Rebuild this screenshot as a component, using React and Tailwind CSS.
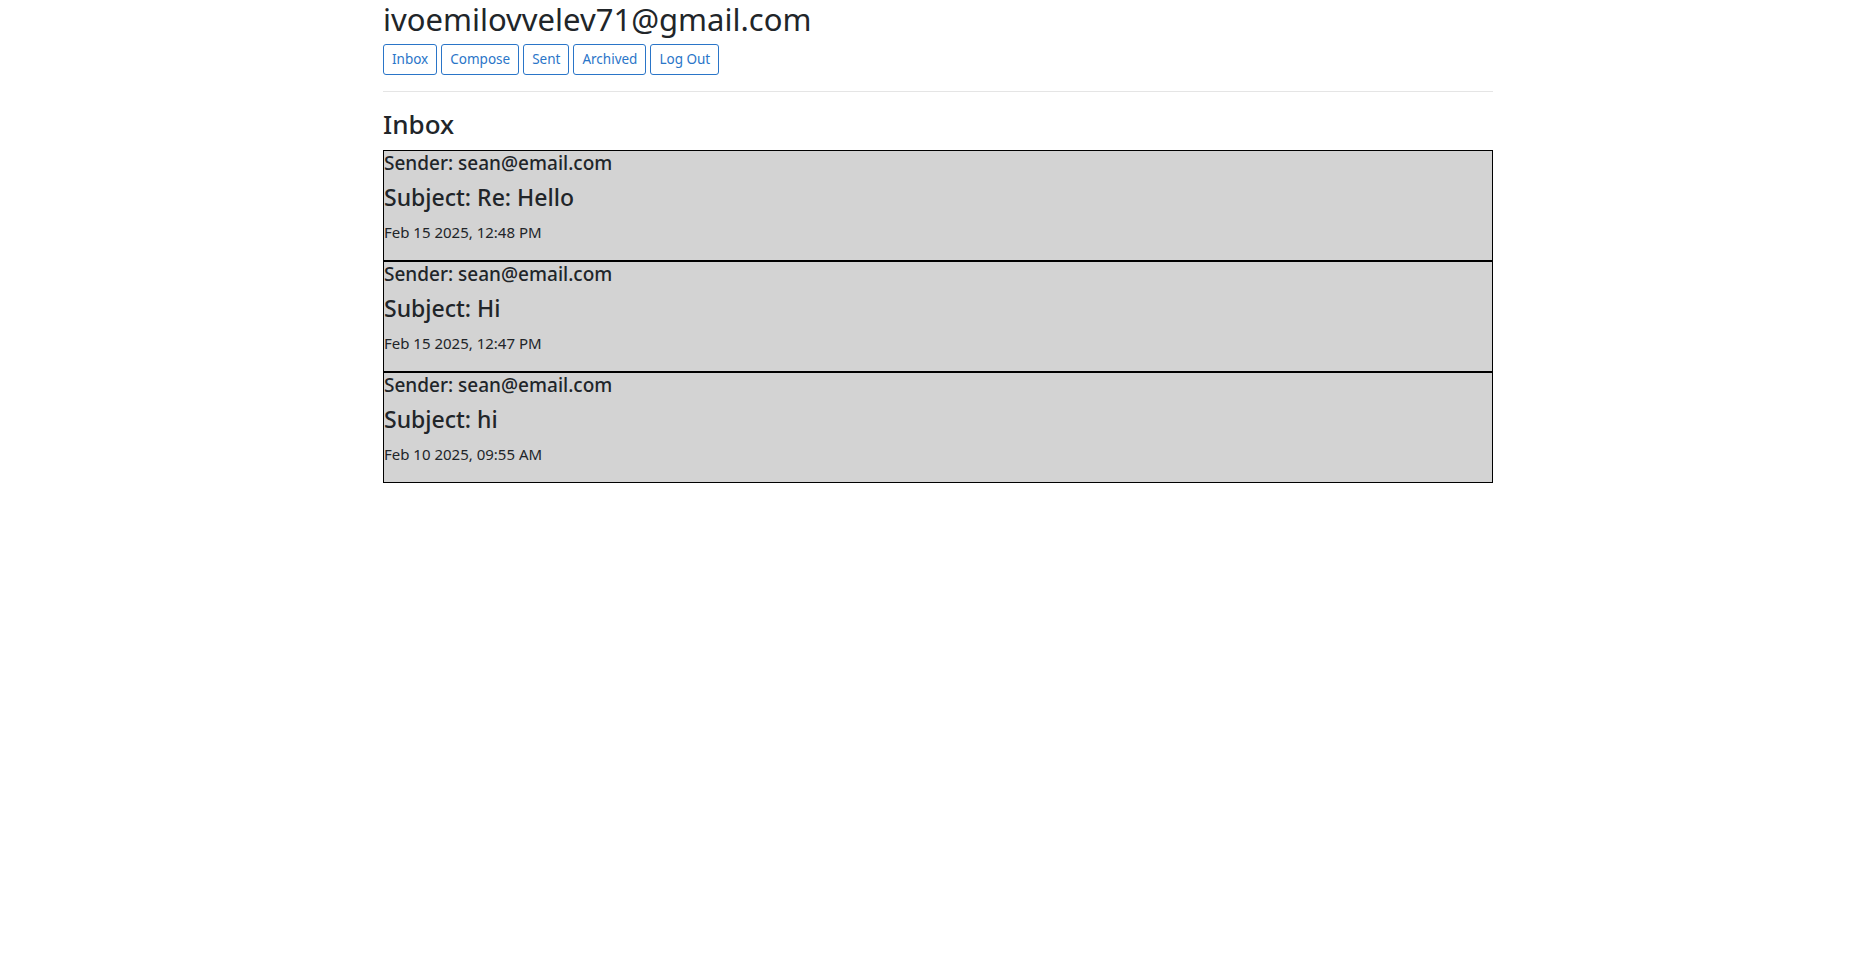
const emails = [
  { sender: 'sean@email.com', subject: 'Re: Hello', date: 'Feb 15 2025, 12:48 PM' },
  { sender: 'sean@email.com', subject: 'Hi', date: 'Feb 15 2025, 12:47 PM' },
  { sender: 'sean@email.com', subject: 'hi', date: 'Feb 10 2025, 09:55 AM' },
];

const navItems = ['Inbox', 'Compose', 'Sent', 'Archived', 'Log Out'];

function EmailRow({ email }) {
  return (
    <div className="border border-black bg-[#d3d3d3]">
      <h5 className="text-[19px] font-medium leading-[24px] mb-2">Sender: {email.sender}</h5>
      <h4 className="text-[23px] font-medium leading-[29px] mb-2">Subject: {email.subject}</h4>
      <p className="leading-[24px] mb-4">
        <span className="text-[15px]">{email.date}</span>
      </p>
    </div>
  );
}

export default function App() {
  return (
    <div className="min-h-screen bg-white text-[#212529] font-['Noto_Sans',sans-serif]">
      <div className="max-w-[1140px] mx-auto px-[15px]">
        <h2 className="text-[31px] font-normal leading-[38px] mb-[6px]">ivoemilovvelev71@gmail.com</h2>
        <div className="flex gap-1">
          {navItems.map((item) => (
            <button
              key={item}
              className="px-2 py-1 text-[13.5px] leading-[21px] text-[#2a75c8] border border-[#2a75c8] rounded-[3px] bg-white cursor-pointer"
            >
              {item}
            </button>
          ))}
        </div>
        <hr className="my-4 border-0 border-t border-black/10" />
        <h3 className="text-[26px] font-medium leading-[33.6px] mb-2">Inbox</h3>
        <div>
          {emails.map((email, i) => (
            <EmailRow key={i} email={email} />
          ))}
        </div>
      </div>
    </div>
  );
}
